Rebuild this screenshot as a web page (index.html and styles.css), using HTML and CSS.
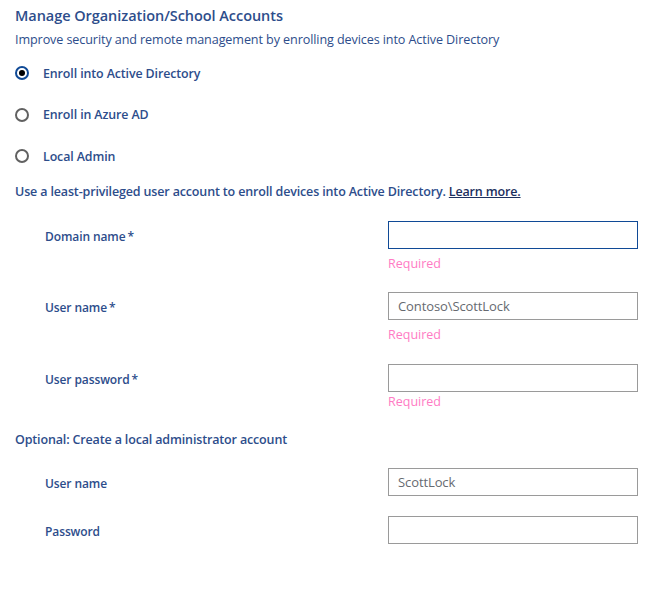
FILE: index.html
```html
<!DOCTYPE html>
<html>
<head>
<meta charset="utf-8">
<link rel="stylesheet" href="styles.css">
</head>
<body>
<div class="page">
  <h1 class="title">Manage Organization/School Accounts</h1>
  <p class="subtitle">Improve security and remote management by enrolling devices into Active Directory</p>

  <div class="radios">
    <label class="radio"><span class="dot checked"></span><span>Enroll into Active Directory</span></label>
    <label class="radio"><span class="dot"></span><span>Enroll in Azure AD</span></label>
    <label class="radio"><span class="dot"></span><span>Local Admin</span></label>
  </div>

  <p class="info">Use a least-privileged user account to enroll devices into Active Directory. <a href="#" class="link">Learn more.</a></p>

  <div class="field field-first">
    <div class="label">Domain name<span class="req">*</span></div>
    <div class="control">
      <div class="input focused"></div>
      <div class="error">Required</div>
    </div>
  </div>

  <div class="field">
    <div class="label">User name<span class="req">*</span></div>
    <div class="control">
      <div class="input">Contoso\ScottLock</div>
      <div class="error">Required</div>
    </div>
  </div>

  <div class="field field-tight">
    <div class="label">User password<span class="req">*</span></div>
    <div class="control">
      <div class="input"></div>
      <div class="error error-tight">Required</div>
    </div>
  </div>

  <p class="section">Optional: Create a local administrator account</p>

  <div class="field field-opt">
    <div class="label">User name</div>
    <div class="control">
      <div class="input">ScottLock</div>
    </div>
  </div>

  <div class="field field-opt">
    <div class="label">Password</div>
    <div class="control">
      <div class="input"></div>
    </div>
  </div>
</div>
</body>
</html>
```

FILE: styles.css
```css
html, body {
  margin: 0;
  padding: 0;
  background: #ffffff;
}
body {
  font-family: "Open Sans", "Noto Sans", sans-serif;
  color: #2d4d8b;
}
.page {
  padding: 6px 15px 0 15px;
}
.title {
  margin: 0;
  font-size: 14.5px;
  line-height: 20px;
  font-weight: 600;
  letter-spacing: -0.05px;
}
.subtitle {
  margin: 6px 0 0 0;
  font-size: 12.6px;
  line-height: 16px;
  letter-spacing: -0.1px;
}
.radios {
  margin-top: 15px;
  display: flex;
  flex-direction: column;
  gap: 21.5px;
}
.radio {
  display: flex;
  align-items: center;
  height: 20px;
  font-size: 12.4px;
  font-weight: 600;
  letter-spacing: -0.1px;
}
.dot {
  box-sizing: border-box;
  width: 14px;
  height: 14px;
  border: 2px solid #616161;
  border-radius: 50%;
  margin-right: 14px;
  flex: none;
  display: flex;
  align-items: center;
  justify-content: center;
}
.dot.checked {
  border-color: #104a96;
}
.dot.checked::after {
  content: "";
  width: 6px;
  height: 6px;
  border-radius: 50%;
  background: #000;
}
.info {
  margin: 18px 0 0 0;
  font-size: 12.5px;
  line-height: 16px;
  font-weight: 600;
  letter-spacing: -0.15px;
}
.link {
  color: #1c2f5e;
  text-decoration: underline;
}
.field {
  display: grid;
  grid-template-columns: 373px 250px;
  align-items: start;
  margin-top: 20px;
}
.field-first {
  margin-top: 21px;
}
.field-tight {
  margin-top: 21px;
}
.label {
  box-sizing: border-box;
  padding-left: 30px;
  padding-top: 2px;
  height: 28px;
  line-height: 28px;
  font-size: 12px;
  font-weight: 600;
  letter-spacing: -0.1px;
}
.req {
  margin-left: 2px;
}
.input {
  box-sizing: border-box;
  height: 28px;
  border: 1px solid #9a9a9a;
  padding: 0 9px;
  line-height: 26px;
  font-size: 13px;
  color: #666a70;
  letter-spacing: -0.1px;
}
.input.focused {
  border-color: #104a96;
}
.error {
  margin-top: 7px;
  font-size: 12.5px;
  line-height: 16px;
  color: #ff7bc4;
}
.error-tight {
  margin-top: 2px;
}
.section {
  margin: 22px 0 0 0;
  font-size: 12.5px;
  line-height: 16px;
  font-weight: 600;
  letter-spacing: -0.15px;
}
.field-opt {
  margin-top: 20px;
}
```
